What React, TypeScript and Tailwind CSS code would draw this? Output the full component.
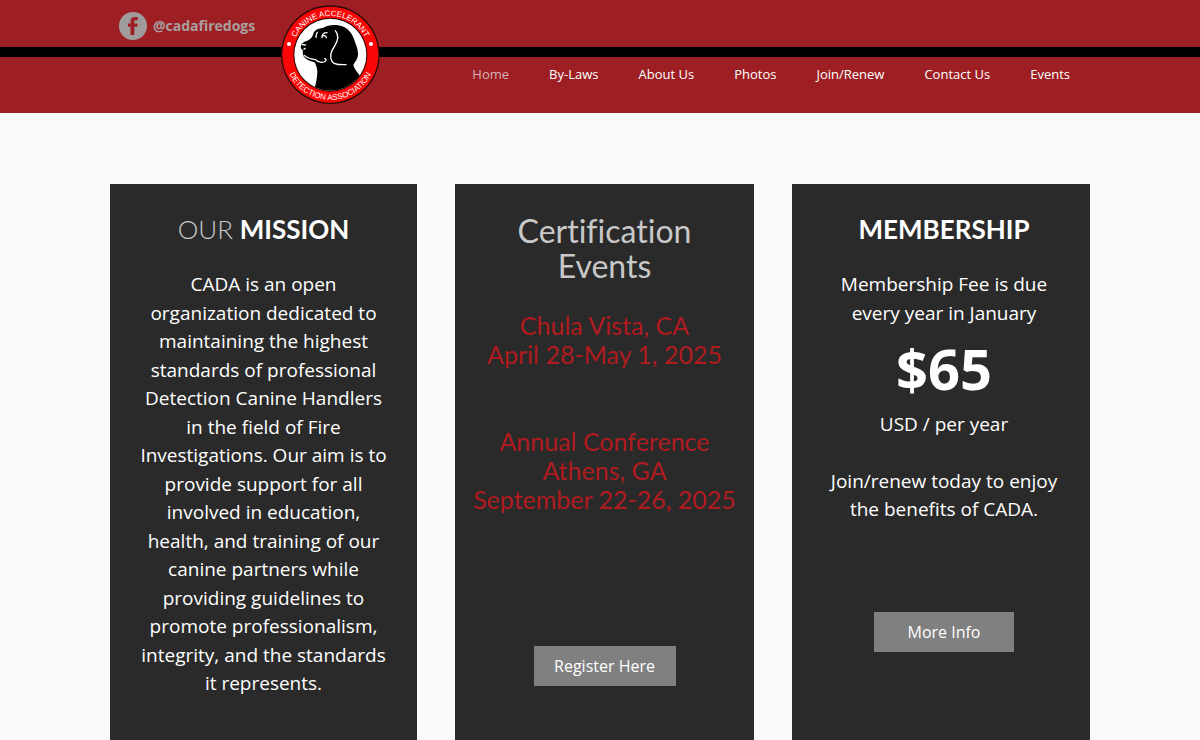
import React from "react";
import clsx from "clsx";

interface NavItem {
  id: number;
  label: string;
  active?: boolean;
}

interface CardProps {
  children: React.ReactNode;
  className?: string;
}

interface CardButtonProps {
  label: string;
  className?: string;
}

const navItems: NavItem[] = [
  {id: 1, label: "Home", active: true},
  {id: 2, label: "By-Laws"},
  {id: 3, label: "About Us"},
  {id: 4, label: "Photos"},
  {id: 5, label: "Join/Renew"},
  {id: 6, label: "Contact Us"},
  {id: 7, label: "Events"},
];

const Logo: React.FC = () => {
  return (
    <svg viewBox="30 15 300 300" className="w-[100px] h-[100px]" role="img" aria-label="Logo">
      <defs>
        <path id="arcTop" d="M65 164 A116 116 0 0 1 297 164" />
        <path id="arcBottom" d="M45 164 A136 136 0 0 0 317 164" />
        <clipPath id="inner">
          <circle cx="181" cy="164" r="108" />
        </clipPath>
      </defs>
      <circle cx="181" cy="164" r="148" fill="#2a0a08" />
      <circle cx="181" cy="164" r="144" fill="#fb0606" />
      <circle cx="181" cy="164" r="111" fill="#200" />
      <circle cx="181" cy="164" r="108" fill="#fff" />
      <g clipPath="url(#inner)">
        <path
          d="M93 137 C94 129 102 125 112 122 C122 118 127 112 130 102 C132 90 146 85 158 84 C174 74 198 72 216 79 C234 84 246 100 252 118 C260 140 268 158 262 174 C258 184 252 188 250 196 C254 208 262 218 274 232 L276 280 L130 280 C136 256 142 236 142 216 C142 204 138 196 134 187 C122 184 110 180 103 172 C98 166 98 158 99 152 C94 148 91 144 93 137 Z"
          fill="#000"
        />
        <g fill="none" stroke="#fff" strokeWidth="4" strokeLinecap="round">
          <path d="M102 166 C112 174 124 178 137 179 C144 186 158 190 166 184 C170 180 168 176 164 176" />
          <path d="M196 92 C206 104 204 122 194 138 C184 152 178 170 186 184 C192 194 208 194 228 194" />
          <path d="M171 98 C162 98 156 102 156 113 M158 108 C163 105 168 108 169 113" />
          <path d="M142 97 C138 102 139 107 138 112" />
          <path d="M97 134 L106 135 M102 148 L106 145" />
        </g>
      </g>
      <circle cx="57" cy="132" r="6" fill="#fff" />
      <circle cx="303" cy="132" r="6" fill="#fff" />
      <text fill="#fff" fontSize="24" fontFamily="Liberation Sans, sans-serif" textAnchor="middle">
        <textPath href="#arcTop" startOffset="50%">
          CANINE ACCELERANT
        </textPath>
      </text>
      <text fill="#fff" fontSize="24" fontFamily="Liberation Sans, sans-serif" textAnchor="middle">
        <textPath href="#arcBottom" startOffset="50%">
          DETECTION ASSOCIATION
        </textPath>
      </text>
    </svg>
  );
};

const FacebookIcon: React.FC = () => {
  return (
    <svg viewBox="0 0 28 28" className="w-7 h-7" aria-hidden="true">
      <circle cx="14" cy="14" r="14" fill="#a09c9c" />
      <path
        d="M11.5 23 V14.8 H9 V11.4 H11.5 V9.2 C11.5 6.4 13.1 5 15.8 5 H18.8 V8.3 H16.8 C15.7 8.3 15.3 8.8 15.3 9.8 V11.4 H18.8 L18.3 14.8 H15.3 V23 Z"
        fill="#9d1f24"
      />
    </svg>
  );
};

const Header: React.FC = () => {
  return (
    <header className="bg-[#9d1f24]">
      <div className="relative mx-auto max-w-[980px]">
        <div className="flex items-center h-[47px] px-2 pt-1">
          <a href="#facebook" className="flex items-center ml-px gap-1.5">
            <FacebookIcon />
            <span className="text-sm font-bold text-[#a9a0a0]">@cadafiredogs</span>
          </a>
        </div>
        <a href="#home" className="absolute z-10 top-[5px] left-[170px]">
          <Logo />
        </a>
      </div>
      <div className="h-[10px] bg-black" />
      <nav className="flex justify-end gap-10 mx-auto max-w-[980px] h-14 px-5 pt-[7px]">
        {navItems.map((item) => (
          <a
            key={item.id}
            href="#"
            className={clsx(
              "text-[13px] leading-5 whitespace-nowrap hover:opacity-75",
              item.active ? "text-[#d3b3b3]" : "text-white"
            )}
          >
            {item.label}
          </a>
        ))}
      </nav>
    </header>
  );
};

const Card: React.FC<CardProps> = ({children, className}) => {
  return (
    <section
      className={clsx(
        "flex flex-col items-center bg-[#2a2a2a] pt-[29px] text-center text-white",
        className
      )}
    >
      {children}
    </section>
  );
};

const CardButton: React.FC<CardButtonProps> = ({label, className}) => {
  return (
    <button
      type="button"
      className={clsx("h-10 bg-[#808080] text-base text-white cursor-pointer", className)}
    >
      {label}
    </button>
  );
};

const App: React.FC = () => {
  return (
    <div className="flex flex-col min-h-screen bg-[#fafafa] font-['Open_Sans',sans-serif]">
      <Header />
      <main className="grid flex-1 w-full grid-cols-[307fr_299fr_298fr] gap-[38px] mx-auto mt-[71px] max-w-[980px]">
        <Card>
          <h2 className="font-['Lato',sans-serif] text-[26px] leading-8">
            <span className="font-light text-[#c8c8c8]">OUR</span>{" "}
            <span className="font-bold">MISSION</span>
          </h2>
          <p className="px-7 mt-[25px] text-[19px] leading-normal">
            CADA is an open organization dedicated to maintaining the highest standards of
            professional Detection Canine Handlers in the field of Fire Investigations. Our aim is
            to provide support for all involved in education, health, and training of our canine
            partners while providing guidelines to promote professionalism, integrity, and the
            standards it represents.
          </p>
        </Card>
        <Card>
          <h2 className="px-10 font-['Lato',sans-serif] text-[32px] leading-[35px] text-[#c8c8c8] [font-variant-ligatures:none]">
            Certification Events
          </h2>
          <div className="mt-7 font-['Lato',sans-serif] text-[25px] leading-[29px] text-[#b01b20] whitespace-nowrap">
            <p>Chula Vista, CA</p>
            <p>April 28-May 1, 2025</p>
          </div>
          <div className="mt-[58px] font-['Lato',sans-serif] text-[25px] leading-[29px] text-[#b01b20] whitespace-nowrap">
            <p>Annual Conference</p>
            <p>Athens, GA</p>
            <p>September 22-26, 2025</p>
          </div>
          <CardButton label="Register Here" className="w-[142px] mt-[132px]" />
        </Card>
        <Card className="pl-1.5">
          <h2 className="font-['Lato',sans-serif] text-[26px] leading-8 font-bold">MEMBERSHIP</h2>
          <p className="px-8 mt-[25px] text-[19px] leading-normal">
            Membership Fee is due every year in January
          </p>
          <p className="mt-[7px] text-[56px] leading-[68px] font-bold">$65</p>
          <p className="mt-2 text-[19px] leading-normal">USD / per year</p>
          <p className="px-7 mt-7 text-[19px] leading-normal">
            Join/renew today to enjoy the benefits of CADA.
          </p>
          <CardButton label="More Info" className="w-[140px] mt-[88px]" />
        </Card>
      </main>
    </div>
  );
};

export default App;
